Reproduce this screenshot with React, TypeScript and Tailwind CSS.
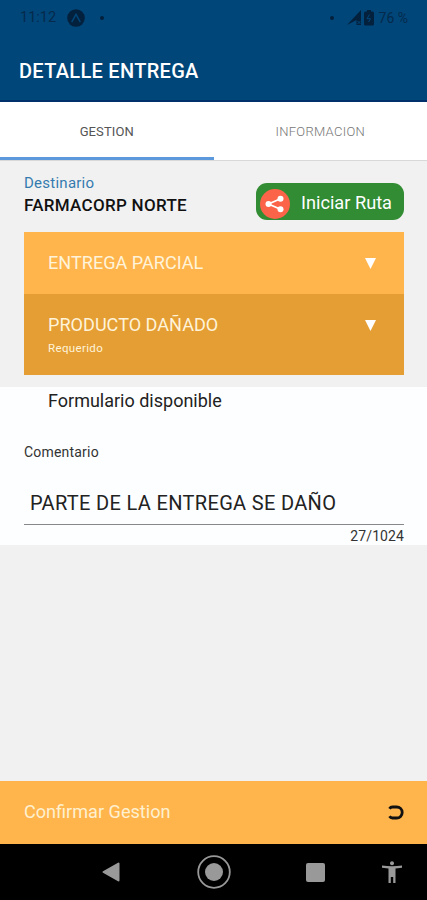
import React from "react";

function StatusBar() {
  return (
    <div className="flex h-9 items-center pl-5 pr-[19px] text-[#052a4c]">
      <span className="w-[47px] text-[14.500px] leading-none">11:12</span>
      <svg width="18" height="18" viewBox="0 0 18 18">
        <circle cx="9" cy="9" r="8.8" fill="#03203d" />
        <path d="M5 12.600 9 5.400l4 7.200" fill="none" stroke="#004679" strokeWidth="1.500" strokeLinecap="round" />
      </svg>
      <span className="ml-[15px] h-1 w-1 rounded-full bg-[#03203d]" />
      <span className="ml-auto h-1 w-1 rounded-full bg-[#03203d]" />
      <svg className="ml-[13px]" width="15" height="16" viewBox="0 0 15 16">
        <path d="M0 15 14 0v15H9.500V10z" fill="#03203d" />
        <path d="m10.500 11 3 3m0-3-3 3" stroke="#004679" strokeWidth="0.900" />
      </svg>
      <svg className="ml-[2px]" width="10" height="16" viewBox="0 0 10 16">
        <path d="M3 0h4v1.500h1.500Q10 1.500 10 3v11q0 1.500-1.500 1.500h-7Q0 15.500 0 14V3q0-1.500 1.500-1.500H3z" fill="#03203d" />
        <path d="M5.500 4.500 3 8.700h3.500L4.500 12" fill="none" stroke="#004679" strokeWidth="1" />
      </svg>
      <span className="ml-[5px] text-[14px] leading-none">76 %</span>
    </div>
  );
}

function Caret() {
  return (
    <svg width="11" height="11" viewBox="0 0 11 11" fill="#fff">
      <path d="M0 0h11L5.500 11z" />
    </svg>
  );
}

function Option({ label, className, note }: { label: string; className: string; note?: string }) {
  return (
    <div className={className}>
      <div className="flex items-center justify-between">
        <span className="text-[18.100px] leading-5 text-[#fff3da]">{label}</span>
        <Caret />
      </div>
      {note && <p className="mt-[6px] text-[11.500px] leading-[14px] tracking-[0.350px] text-[#fff3da]">{note}</p>}
    </div>
  );
}

export default function App() {
  return (
    <div className="flex h-[900px] w-[427px] flex-col overflow-hidden whitespace-nowrap bg-[#f1f1f1] font-['Roboto',sans-serif]">
      {/* Header */}
      <header className="h-[102px] shrink-0 border-b-2 border-[#00306c] bg-[#004679]">
        <StatusBar />
        <h1 className="mt-[25px] pl-[19px] text-[20px] font-medium leading-5 tracking-[0.300px] text-white">DETALLE ENTREGA</h1>
      </header>

      {/* Tabs */}
      <nav className="grid h-[59px] shrink-0 grid-cols-2 border-b border-[#d8d8d8] bg-white text-center text-[13px] leading-[60px]">
        <span className="h-[58px] border-b-[3px] border-[#5b98dc] tracking-[0.100px] text-[#555]">GESTION</span>
        <span className="font-light tracking-[0.300px] text-[#777]">INFORMACION</span>
      </nav>

      {/* Recipient */}
      <section className="flex h-[71px] shrink-0 justify-between pl-6 pr-[23px]">
        <div className="pt-[13px]">
          <p className="text-[15px] leading-[18px] tracking-[0.250px] text-[#347baf]">Destinario</p>
          <p className="mt-[3px] text-[17px] font-medium leading-5 tracking-[0.300px] text-[#111]">FARMACORP NORTE</p>
        </div>
        <button className="mt-[22px] flex h-[37px] w-[148px] items-center rounded-[11px] bg-[#318c33] pl-[3.500px] text-white">
          <svg className="mt-[5px]" width="30" height="30" viewBox="0 0 30 30">
            <circle cx="15" cy="15" r="15" fill="#fb6449" />
            <path d="M20.500 9.700 8.500 15l12 5.300" fill="none" stroke="#fff" strokeWidth="1.800" />
            <circle cx="20.500" cy="9.700" r="3" fill="#fff" />
            <circle cx="8.500" cy="15" r="3" fill="#fff" />
            <circle cx="20.500" cy="20.300" r="3" fill="#fff" />
          </svg>
          <span className="ml-[11.500px] mt-[2px] text-[18.200px] leading-5">Iniciar Ruta</span>
        </button>
      </section>

      {/* Options */}
      <section className="ml-6 mr-[23px] shrink-0">
        <Option label="ENTREGA PARCIAL" className="h-[62px] bg-[#ffb54c] pl-6 pr-7 pt-[21px]" />
        <Option label="PRODUCTO DAÑADO" note="Requerido" className="h-[81px] bg-[#e49e33] pl-6 pr-7 pt-[21px]" />
      </section>

      {/* Comment form */}
      <section className="mt-3 h-[158px] shrink-0 bg-[#fdfeff] pl-6 pr-[23px]">
        <p className="pl-6 pt-[3px] text-[18px] leading-[22px] text-[#222]">Formulario disponible</p>
        <p className="mt-[31px] text-[14px] leading-[18px] tracking-[0.200px] text-[#333]">Comentario</p>
        <div className="mt-[30px] h-[34px] border-b border-[#888] pl-[6px] text-[20px] leading-6 tracking-[0.330px] text-[#222]">
          PARTE DE LA ENTREGA SE DAÑO
        </div>
        <p className="mt-[3px] text-right text-[14px] leading-4 tracking-[0.100px] text-[#333]">27/1024</p>
      </section>

      {/* Confirm */}
      <footer className="mt-auto flex h-[63px] shrink-0 items-center justify-between bg-[#ffb54c] pl-6 pr-[23px]">
        <span className="-mt-px text-[18.100px] leading-5 text-[#fff0d0]">Confirmar Gestion</span>
        <svg width="16" height="15" viewBox="0 0 16 15">
          <path d="M1.500 3.700Q2.500 2 4.500 2h4.200a5.500 5.500 0 0 1 0 11H4.500Q2.500 13 1.500 11.300" fill="none" stroke="#111" strokeWidth="2.800" />
        </svg>
      </footer>

      {/* Android navigation */}
      <div className="flex h-14 shrink-0 items-center bg-black">
        <svg className="ml-[102px]" width="18" height="20" viewBox="0 0 18 20">
          <path d="M16.500 1.500v17L1.500 10z" fill="#999" stroke="#999" strokeWidth="2" strokeLinejoin="round" />
        </svg>
        <svg className="ml-[77px]" width="34" height="34" viewBox="0 0 34 34">
          <circle cx="17" cy="17" r="15.800" fill="none" stroke="#999" strokeWidth="1.800" />
          <circle cx="17" cy="17" r="9" fill="#999" />
        </svg>
        <span className="ml-[75px] h-[19px] w-[19px] rounded-[2px] bg-[#999]" />
        <svg className="ml-[57px]" width="20" height="22" viewBox="0 0 20 22" fill="#999">
          <circle cx="10" cy="2.200" r="2" />
          <path d="M0 4.500q10 1.500 20 0v2.200l-6.500.8V22h-2.300v-6H8.800v6H6.500V7.500L0 6.700z" />
        </svg>
      </div>
    </div>
  );
}
